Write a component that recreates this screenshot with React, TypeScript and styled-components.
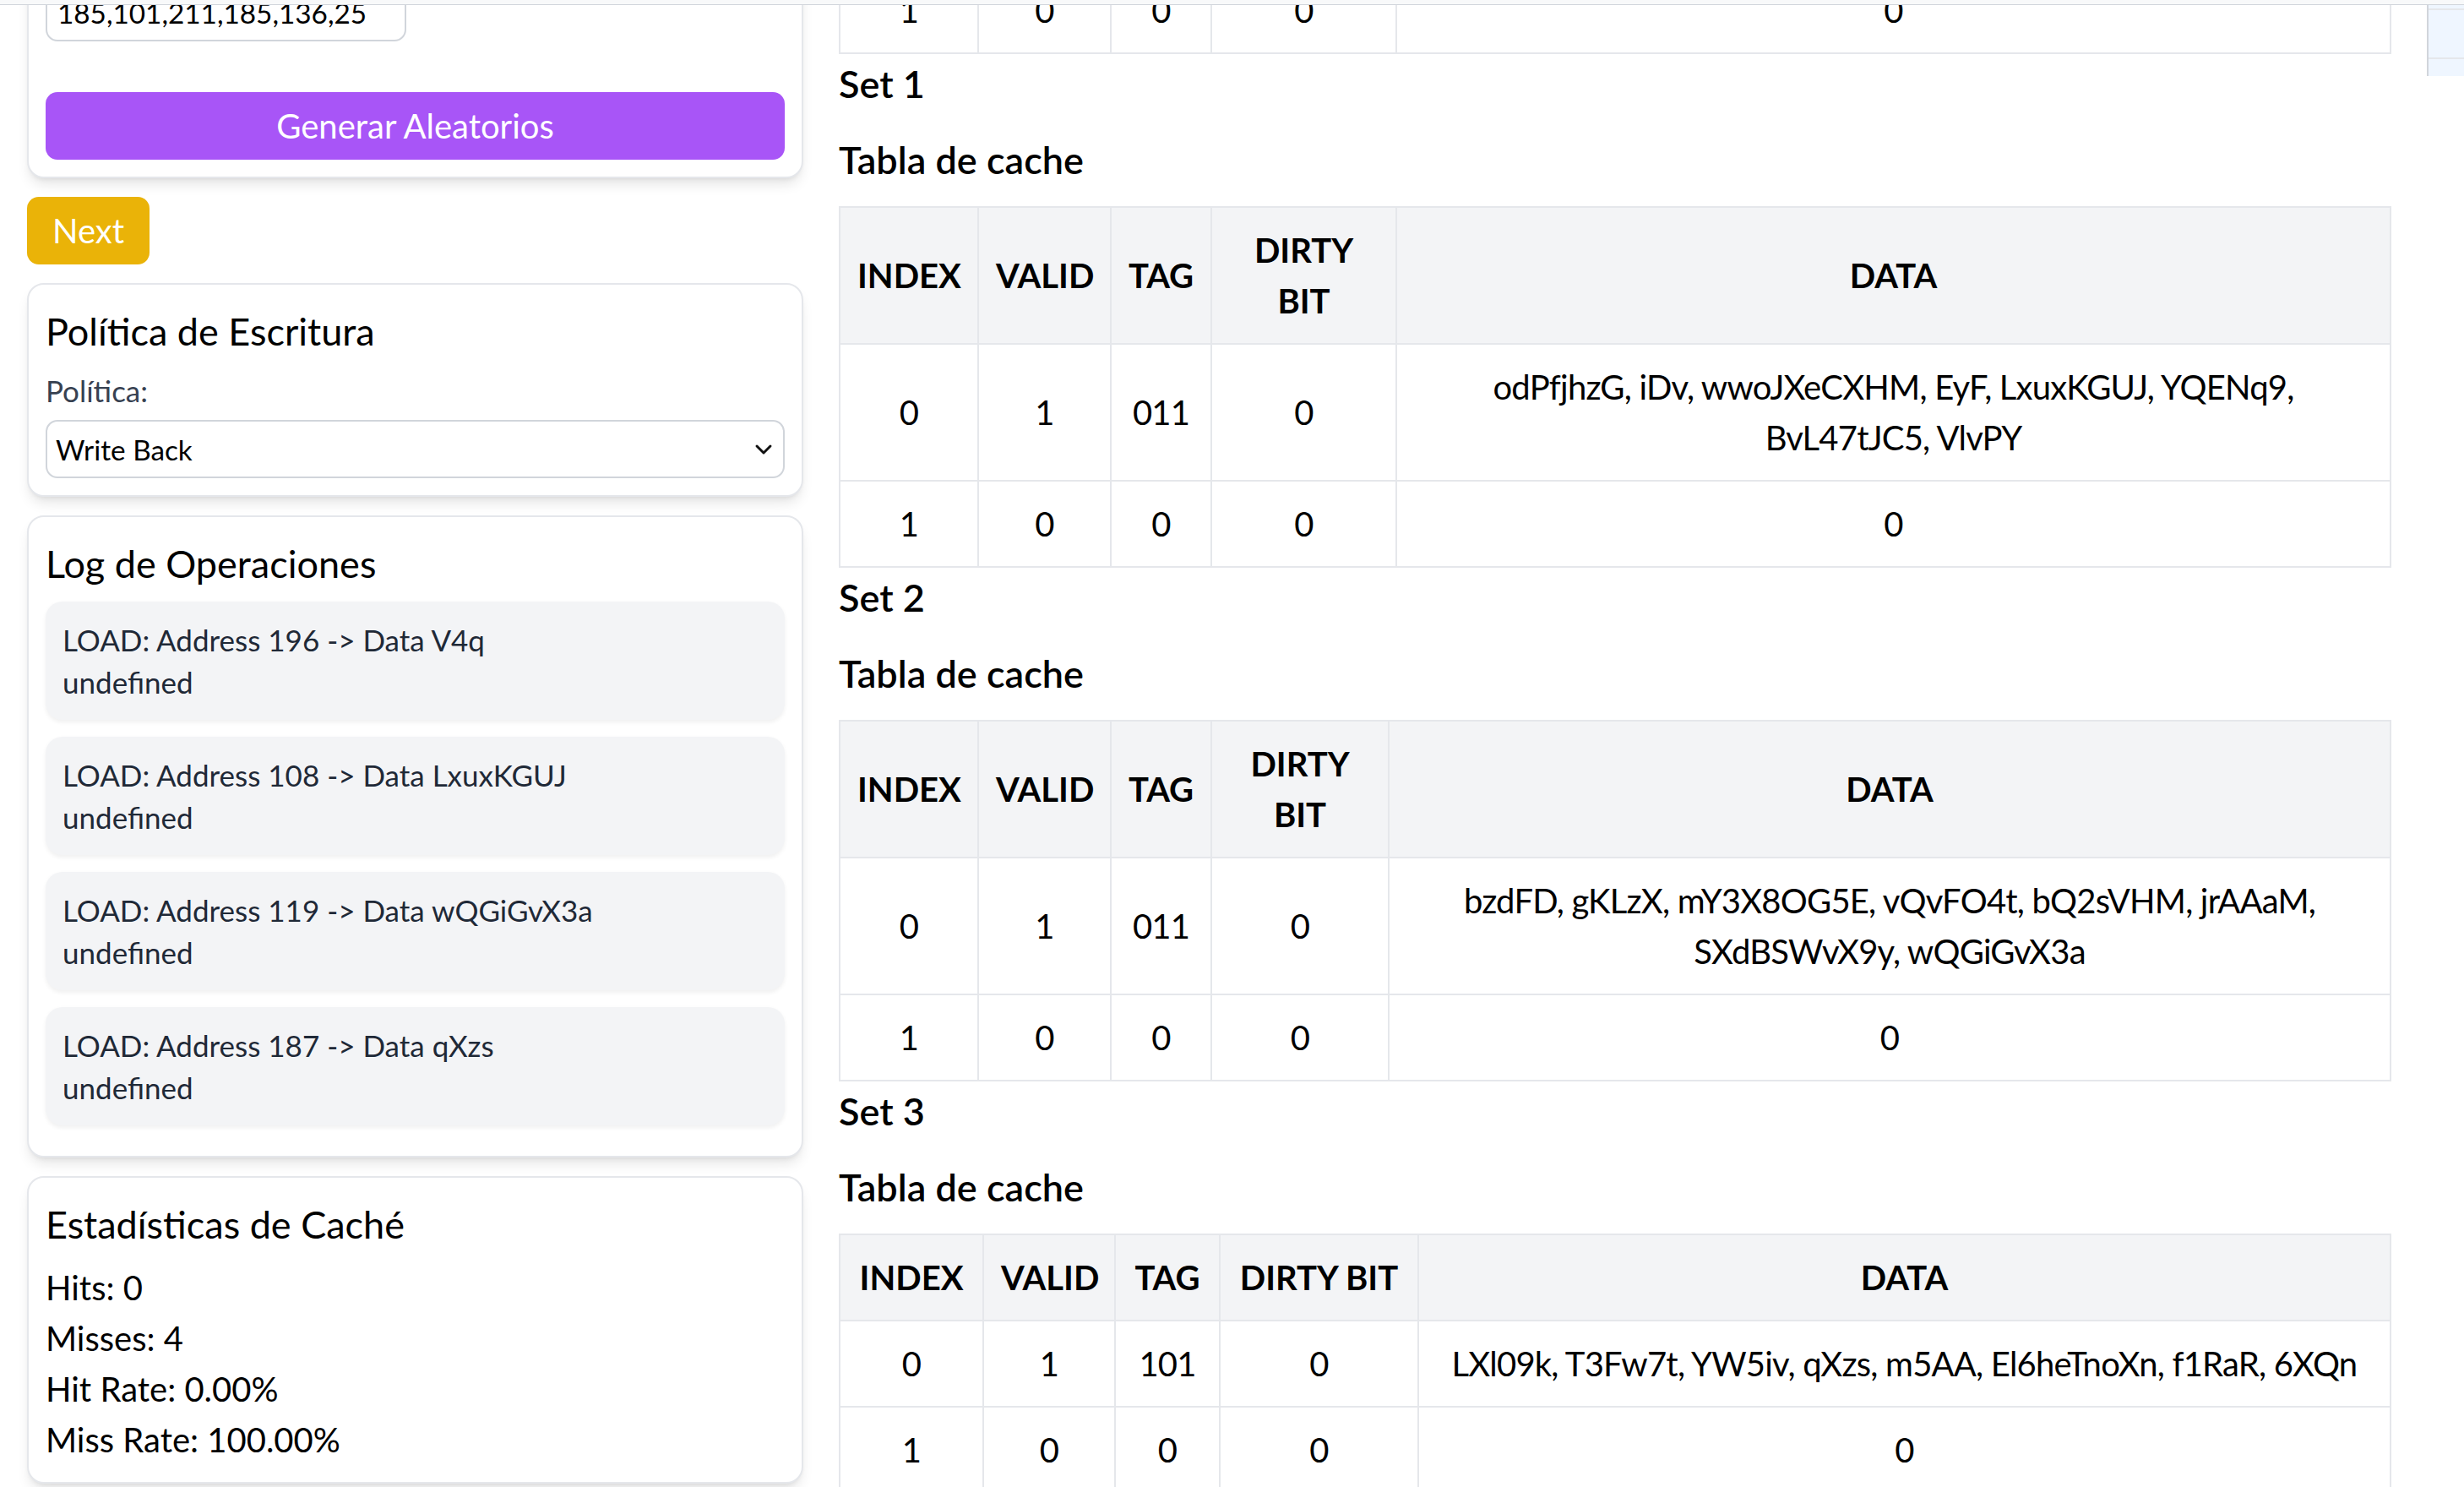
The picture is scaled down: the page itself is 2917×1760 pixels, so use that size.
import React from "react";
import styled, { createGlobalStyle } from "styled-components";
import { ChevronDown } from "lucide-react";

const GlobalStyle = createGlobalStyle`
  html, body { margin: 0; padding: 0; background: #ffffff; }
  body {
    font-family: Lato, "Noto Sans", "DejaVu Sans", sans-serif;
    color: #000000;
    overflow: hidden;
  }
  *, *::before, *::after { box-sizing: border-box; }
`;

/* ---------- page frame ---------- */
const Page = styled.div`
  height: 100vh;
  display: flex;
  flex-direction: column;
  overflow: hidden;
`;

const TopStrip = styled.div`
  flex: none;
  height: 6px;
  background: #f8f9fa;
  border-bottom: 1px solid #d1d5db;
`;

const Viewport = styled.div`
  flex: 1;
  overflow: hidden;
`;

const ScrolledContent = styled.main<{ $scrollTop: number }>`
  margin-top: ${(p) => -p.$scrollTop}px;
  padding-left: 32px;
  display: grid;
  grid-template-columns: 919px 1838px 919px;
  column-gap: 42px;
  align-items: start;
`;

/* ---------- sidebar ---------- */
const Sidebar = styled.aside`
  display: flex;
  flex-direction: column;
  gap: 22px;
`;

const Card = styled.section`
  background: #ffffff;
  border: 2px solid #e5e7eb;
  border-radius: 20px;
  padding: 20px;
  box-shadow: 0 10px 15px -3px rgba(0, 0, 0, 0.1), 0 4px 6px -4px rgba(0, 0, 0, 0.1);
  display: flex;
  flex-direction: column;
`;

const CardTitle = styled.h2`
  margin: 0 0 10px;
  font-size: 45px;
  line-height: 70px;
  font-weight: 400;
  color: #000000;
`;

const FieldStack = styled.div`
  display: flex;
  flex-direction: column;
  gap: 23px;
`;

const Field = styled.label`
  display: flex;
  flex-direction: column;
  gap: 10px;
`;

const FieldLabel = styled.span`
  font-size: 35px;
  line-height: 50px;
  color: #374151;
`;

const TextInput = styled.input`
  width: 427px;
  height: 68px;
  padding: 0 12px;
  border: 2px solid #d1d5db;
  border-radius: 14px;
  font-family: inherit;
  font-size: 33.3px;
  color: #000000;
  background: #ffffff;
  outline: none;
`;

const SelectWrap = styled.div`
  position: relative;
  display: flex;
`;

const Select = styled.select`
  width: 100%;
  height: 69px;
  padding: 0 10px;
  appearance: none;
  border: 2px solid #d1d5db;
  border-radius: 14px;
  background: #ffffff;
  font-family: inherit;
  font-size: 33.3px;
  color: #000000;
  outline: none;
`;

const SelectArrow = styled.span`
  position: absolute;
  right: 9px;
  top: 50%;
  transform: translateY(-50%);
  display: flex;
  pointer-events: none;
  color: #111111;
`;

const SolidButton = styled.button<{ $tone: "purple" | "yellow"; $block?: boolean }>`
  height: 80px;
  padding: 0 30px;
  border: none;
  border-radius: 14px;
  background: ${(p) => (p.$tone === "purple" ? "#a855f7" : "#eab308")};
  color: #ffffff;
  font-family: inherit;
  font-size: 40px;
  line-height: 60px;
  cursor: pointer;
  width: ${(p) => (p.$block ? "100%" : "auto")};
  align-self: ${(p) => (p.$block ? "stretch" : "flex-start")};
`;

const GenerateButton = styled(SolidButton)`
  margin-top: 60px;
`;

const LogList = styled.div`
  display: flex;
  flex-direction: column;
  gap: 20px;
  margin-bottom: 16px;
`;

const LogItem = styled.div`
  background: #f3f4f6;
  border-radius: 20px;
  padding: 20px;
  box-shadow: 0 2.5px 5px rgba(0, 0, 0, 0.06);
  font-size: 35px;
  line-height: 50px;
  color: #1f2937;
`;

const StatLine = styled.p`
  margin: 0;
  font-size: 40px;
  line-height: 60px;
  color: #000000;
`;

/* ---------- cache tables ---------- */
const CachePanel = styled.section`
  display: flex;
  flex-direction: column;
`;

const SetBlock = styled.div`
  display: flex;
  flex-direction: column;
`;

const SetLabel = styled.h3`
  margin: 0 0 20px;
  font-size: 45px;
  line-height: 70px;
  font-weight: 600;
`;

const TableTitle = styled.h4`
  margin: 0 0 20px;
  font-size: 45px;
  line-height: 70px;
  font-weight: 600;
`;

const CacheTable = styled.table`
  width: 100%;
  table-layout: fixed;
  border-collapse: collapse;
  border: 2px solid #e5e7eb;
`;

const Col = styled.col<{ $w?: number }>`
  width: ${(p) => (p.$w ? `${p.$w}px` : "auto")};
`;

const HeadCell = styled.th`
  background: #f3f4f6;
  border: 2px solid #e5e7eb;
  padding: 20px;
  font-size: 40px;
  line-height: 60px;
  font-weight: 700;
  text-align: center;
  text-transform: uppercase;
  vertical-align: middle;
`;

const Cell = styled.td`
  border: 2px solid #e5e7eb;
  padding: 20px;
  font-size: 40px;
  line-height: 60px;
  letter-spacing: -0.02em;
  text-align: center;
  vertical-align: middle;
`;

/* ---------- memory column (mostly off-screen) ---------- */
const MemoryPanel = styled.section`
  display: flex;
  flex-direction: column;
`;

const MemoryTable = styled.div`
  display: flex;
  flex-direction: column;
  border-left: 2px solid #d1d5db;
`;

const MemoryRow = styled.div`
  display: grid;
  grid-template-columns: 1fr 1fr;
  background: #eff6ff;
  border-bottom: 2px solid #e5e7eb;
  padding: 7px 0;
  font-size: 35px;
  line-height: 42px;
  text-align: center;
`;

const MemoryTail = styled.div`
  height: 20px;
  background: #eff6ff;
`;

/* ---------- data ---------- */
type Row = { index: number; valid: number; tag: string; dirty: number; data: string };
type CacheSet = { name: string; cols: number[]; rows: Row[] };

const sets: CacheSet[] = [
  {
    name: "Set 0",
    cols: [164, 157, 119, 219],
    rows: [
      { index: 0, valid: 1, tag: "110", dirty: 0, data: "Ab3kX, V4q, pLm9Tz, Qw2e, hY7uIo, zX5c, Rt8vBn, K1mN" },
      { index: 1, valid: 0, tag: "0", dirty: 0, data: "0" },
    ],
  },
  {
    name: "Set 1",
    cols: [164, 157, 119, 219],
    rows: [
      { index: 0, valid: 1, tag: "011", dirty: 0, data: "odPfjhzG, iDv, wwoJXeCXHM, EyF, LxuxKGUJ, YQENq9, BvL47tJC5, VlvPY" },
      { index: 1, valid: 0, tag: "0", dirty: 0, data: "0" },
    ],
  },
  {
    name: "Set 2",
    cols: [164, 157, 119, 210],
    rows: [
      { index: 0, valid: 1, tag: "011", dirty: 0, data: "bzdFD, gKLzX, mY3X8OG5E, vQvFO4t, bQ2sVHM, jrAAaM, SXdBSWvX9y, wQGiGvX3a" },
      { index: 1, valid: 0, tag: "0", dirty: 0, data: "0" },
    ],
  },
  {
    name: "Set 3",
    cols: [170, 156, 124, 235],
    rows: [
      { index: 0, valid: 1, tag: "101", dirty: 0, data: "LXl09k, T3Fw7t, YW5iv, qXzs, m5AA, El6heTnoXn, f1RaR, 6XQn" },
      { index: 1, valid: 0, tag: "0", dirty: 0, data: "0" },
    ],
  },
];

const logs = [
  "LOAD: Address 196 -> Data V4q",
  "LOAD: Address 108 -> Data LxuxKGUJ",
  "LOAD: Address 119 -> Data wQGiGvX3a",
  "LOAD: Address 187 -> Data qXzs",
];

const memory = [
  ["176", "hT5w"], ["177", "Kq2P"], ["178", "zN8r"], ["179", "Wd4s"],
  ["180", "Lm0x"], ["181", "Yv7c"], ["182", "Pb3j"], ["183", "Rg6u"],
];

function CacheSetView({ set }: { set: CacheSet }) {
  return (
    <SetBlock>
      <SetLabel>{set.name}</SetLabel>
      <TableTitle>Tabla de cache</TableTitle>
      <CacheTable>
        <colgroup>
          {set.cols.map((w, i) => (
            <Col key={i} $w={w} />
          ))}
          <Col />
        </colgroup>
        <thead>
          <tr>
            <HeadCell>Index</HeadCell>
            <HeadCell>Valid</HeadCell>
            <HeadCell>Tag</HeadCell>
            <HeadCell>Dirty Bit</HeadCell>
            <HeadCell>Data</HeadCell>
          </tr>
        </thead>
        <tbody>
          {set.rows.map((r) => (
            <tr key={r.index}>
              <Cell>{r.index}</Cell>
              <Cell>{r.valid}</Cell>
              <Cell>{r.tag}</Cell>
              <Cell>{r.dirty}</Cell>
              <Cell>{r.data}</Cell>
            </tr>
          ))}
        </tbody>
      </CacheTable>
    </SetBlock>
  );
}

export default function App() {
  return (
    <>
      <GlobalStyle />
      <Page>
        <TopStrip />
        <Viewport>
          <ScrolledContent $scrollTop={490}>
            <Sidebar>
              <Card>
                <CardTitle>Configuración</CardTitle>
                <FieldStack>
                  <Field>
                    <FieldLabel>Asociatividad:</FieldLabel>
                    <SelectWrap>
                      <Select defaultValue="2">
                        <option value="2">2 vías</option>
                        <option value="4">4 vías</option>
                      </Select>
                      <SelectArrow>
                        <ChevronDown size={32} strokeWidth={2.2} />
                      </SelectArrow>
                    </SelectWrap>
                  </Field>
                  <Field>
                    <FieldLabel>Tamaño de bloque:</FieldLabel>
                    <TextInput defaultValue="8" />
                  </Field>
                  <Field>
                    <FieldLabel>Direcciones:</FieldLabel>
                    <TextInput defaultValue="185,101,211,185,136,25" />
                  </Field>
                </FieldStack>
                <GenerateButton $tone="purple" $block>
                  Generar Aleatorios
                </GenerateButton>
              </Card>

              <SolidButton $tone="yellow">Next</SolidButton>

              <Card>
                <CardTitle>Política de Escritura</CardTitle>
                <Field>
                  <FieldLabel>Política:</FieldLabel>
                  <SelectWrap>
                    <Select defaultValue="wb">
                      <option value="wb">Write Back</option>
                      <option value="wt">Write Through</option>
                    </Select>
                    <SelectArrow>
                      <ChevronDown size={32} strokeWidth={2.2} />
                    </SelectArrow>
                  </SelectWrap>
                </Field>
              </Card>

              <Card>
                <CardTitle>Log de Operaciones</CardTitle>
                <LogList>
                  {logs.map((l) => (
                    <LogItem key={l}>
                      {l}
                      <br />
                      undefined
                    </LogItem>
                  ))}
                </LogList>
              </Card>

              <Card>
                <CardTitle>Estadísticas de Caché</CardTitle>
                <StatLine>Hits: 0</StatLine>
                <StatLine>Misses: 4</StatLine>
                <StatLine>Hit Rate: 0.00%</StatLine>
                <StatLine>Miss Rate: 100.00%</StatLine>
              </Card>
            </Sidebar>

            <CachePanel>
              {sets.map((s) => (
                <CacheSetView key={s.name} set={s} />
              ))}
            </CachePanel>

            <MemoryPanel>
              <SetLabel>Memoria principal</SetLabel>
              <MemoryTable>
                {memory.map(([addr, val]) => (
                  <MemoryRow key={addr}>
                    <span>{addr}</span>
                    <span>{val}</span>
                  </MemoryRow>
                ))}
                <MemoryTail />
              </MemoryTable>
            </MemoryPanel>
          </ScrolledContent>
        </Viewport>
      </Page>
    </>
  );
}
